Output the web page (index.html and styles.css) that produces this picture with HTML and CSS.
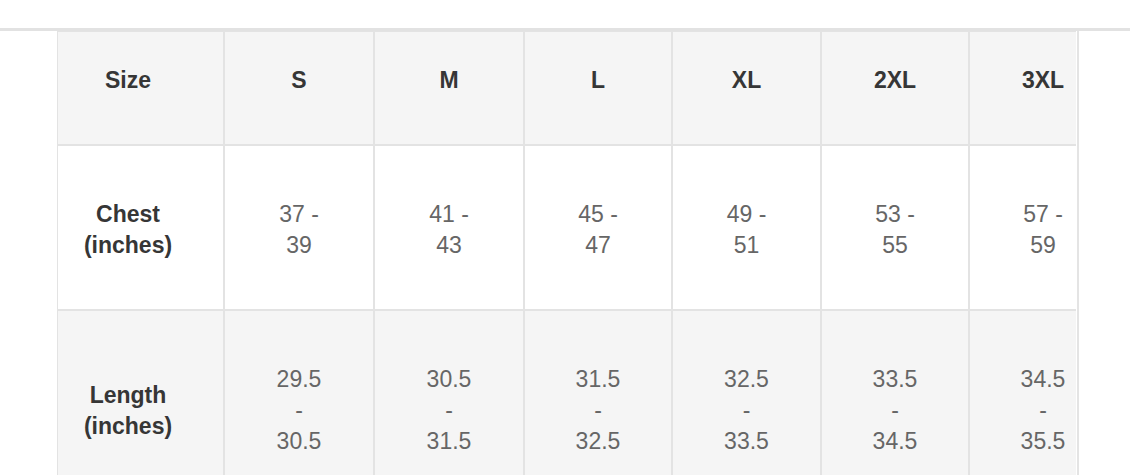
FILE: index.html
```html
<!DOCTYPE html>
<html lang="en">
<head>
<meta charset="utf-8">
<title>Size chart</title>
<link rel="stylesheet" href="styles.css">
</head>
<body>
<div class="topbar"></div>
<div class="chart">
  <div class="frame">
    <div class="scroller">
      <table class="sizes">
        <colgroup>
          <col class="w-167">
          <col class="w-150">
          <col class="w-150">
          <col class="w-148">
          <col class="w-149">
          <col class="w-148">
          <col class="w-148">
        </colgroup>
        <thead>
          <tr>
            <th class="label">Size</th>
            <th>S</th>
            <th>M</th>
            <th>L</th>
            <th>XL</th>
            <th>2XL</th>
            <th>3XL</th>
          </tr>
        </thead>
        <tbody>
          <tr class="row-white">
            <th class="label">Chest (inches)</th>
            <td>37 - 39</td>
            <td>41 - 43</td>
            <td>45 - 47</td>
            <td>49 - 51</td>
            <td>53 - 55</td>
            <td>57 - 59</td>
          </tr>
          <tr class="row-grey">
            <th class="label">Length (inches)</th>
            <td>29.5 - 30.5</td>
            <td>30.5 - 31.5</td>
            <td>31.5 - 32.5</td>
            <td>32.5 - 33.5</td>
            <td>33.5 - 34.5</td>
            <td>34.5 - 35.5</td>
          </tr>
        </tbody>
      </table>
    </div>
  </div>
</div>
</body>
</html>
```
FILE: styles.css
```css
html, body {
  margin: 0;
  padding: 0;
  background: #fff;
}

body {
  font-family: "Liberation Sans", Arial, sans-serif;
  font-size: 23px;
  line-height: 31px;
  color: #333;
}

.topbar {
  height: 28px;
  border-bottom: 3px solid #e2e2e2;
}

.chart {
  padding-left: 57px;
}

.frame {
  width: 1019px;
  padding-right: 1px;
  border-right: 2px solid #e4e4e4;
}

.scroller {
  overflow: hidden;
}

.sizes {
  border-collapse: separate;
  border-spacing: 0;
  table-layout: fixed;
  width: 1060px;
}

.w-167 { width: 167px; }
.w-150 { width: 150px; }
.w-148 { width: 148px; }
.w-149 { width: 149px; }

.sizes th,
.sizes td {
  box-sizing: border-box;
  border: 1px solid #e3e3e3;
  text-align: center;
  vertical-align: middle;
  padding: 53px 49px 48px;
}

.sizes thead th {
  background: #f5f5f5;
  font-weight: 700;
  color: #363636;
  padding-top: 33px;
  padding-bottom: 48px;
  vertical-align: top;
}

.sizes .label {
  padding-left: 12px;
  padding-right: 37px;
  font-weight: 700;
  color: #363636;
}

.sizes thead th.label {
  padding-left: 12px;
  padding-right: 37px;
}

.sizes td {
  color: #666;
  font-weight: 400;
}

.row-white th,
.row-white td {
  background: #fff;
}

.row-grey th,
.row-grey td {
  background: #f5f5f5;
}
```
